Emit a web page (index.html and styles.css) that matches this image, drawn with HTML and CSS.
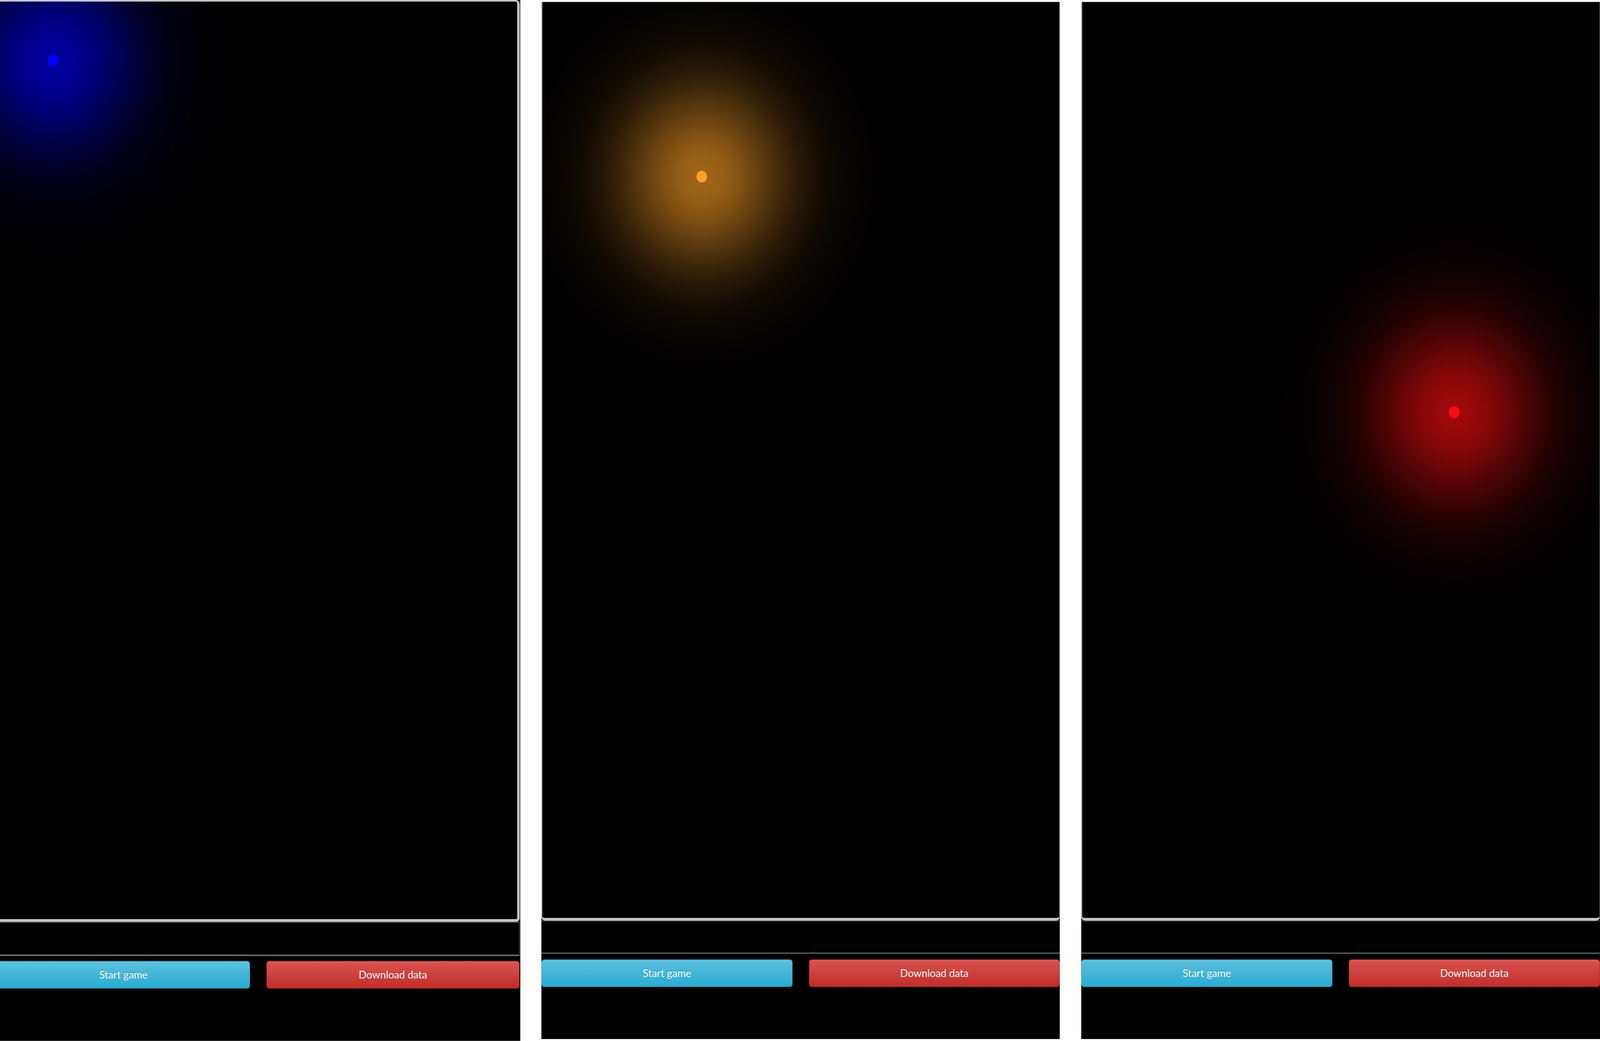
FILE: index.html
```html
<!DOCTYPE html>
<html lang="en">
<head>
<meta charset="utf-8">
<title>Game panels</title>
<link rel="stylesheet" href="styles.css">
</head>
<body>
<div class="stage">
  <section class="panel panel-first">
    <div class="panel-inner">
      <div class="canvas canvas-first glow-blue">
        <span class="dot dot-blue"></span>
      </div>
      <div class="status status-first"></div>
      <div class="actions actions-first">
        <button class="btn btn-info">Start game</button>
        <button class="btn btn-danger">Download data</button>
      </div>
    </div>
  </section>
  <section class="panel panel-other">
    <div class="panel-inner">
      <div class="canvas canvas-other glow-orange">
        <span class="dot dot-orange"></span>
      </div>
      <div class="status"></div>
      <div class="actions">
        <button class="btn btn-info">Start game</button>
        <button class="btn btn-danger">Download data</button>
      </div>
    </div>
  </section>
  <section class="panel panel-other panel-last">
    <div class="panel-inner">
      <div class="canvas canvas-other glow-red">
        <span class="dot dot-red"></span>
      </div>
      <div class="status"></div>
      <div class="actions">
        <button class="btn btn-info">Start game</button>
        <button class="btn btn-danger">Download data</button>
      </div>
    </div>
  </section>
</div>
</body>
</html>
```

FILE: styles.css
```css
:root {
  /* one pixel of the 4524 x 2664 design, mapped onto the viewport */
  --ux: calc(100vw / 4524);
  --uy: calc(100vh / 2664);
}

html, body {
  margin: 0;
  padding: 0;
  background: #ffffff;
}

body {
  width: 100vw;
  height: 100vh;
  overflow: hidden;
  font-family: Lato, "Open Sans", "Liberation Sans", sans-serif;
}

.stage {
  display: flex;
  gap: calc(60 * var(--ux));
  width: 100%;
  height: 100%;
}

.panel {
  background: #000;
  overflow: hidden;
  flex: none;
}

.panel-first {
  box-sizing: border-box;
  width: calc(1471 * var(--ux));
  height: calc(2664 * var(--uy));
  border-bottom: calc(1 * var(--uy)) solid #5e5e5e;
}

.panel-other {
  width: calc(1466 * var(--ux));
  height: calc(2654 * var(--uy));
  margin-top: calc(5 * var(--uy));
}

.panel-last {
  width: calc(1467 * var(--ux));
}

.panel-inner {
  display: flex;
  flex-direction: column;
  height: 100%;
}

.panel-first .panel-inner {
  margin-left: calc(-9 * var(--ux));
  width: calc(1478 * var(--ux));
}

/* ---------- canvas ---------- */
.canvas {
  position: relative;
  box-sizing: border-box;
  background-color: #000;
  background-origin: border-box;
  background-clip: border-box;
  background-image: radial-gradient(ellipse calc(520 * var(--ux)) calc(520 * var(--uy)) at calc(var(--x) * var(--ux)) calc(var(--y) * var(--uy)),
    rgba(var(--c), 0.63) 0%,
    rgba(var(--c), 0.60) 9.6%,
    rgba(var(--c), 0.52) 19.2%,
    rgba(var(--c), 0.41) 28.8%,
    rgba(var(--c), 0.30) 38.5%,
    rgba(var(--c), 0.195) 48.1%,
    rgba(var(--c), 0.116) 57.7%,
    rgba(var(--c), 0.063) 67.3%,
    rgba(var(--c), 0.031) 76.9%,
    rgba(var(--c), 0.014) 86.5%,
    rgba(var(--c), 0) 100%);
  flex: none;
}

.canvas-first {
  width: calc(1478 * var(--ux));
  height: calc(2359 * var(--uy));
  border-style: solid;
  border-color: rgba(255, 255, 255, 0.78);
  border-width: calc(4 * var(--uy)) calc(7 * var(--ux)) calc(7 * var(--uy)) calc(7 * var(--ux));
  border-radius: 0 calc(10 * var(--ux)) calc(10 * var(--ux)) calc(10 * var(--ux)) / 0 calc(10 * var(--uy)) calc(10 * var(--uy)) calc(10 * var(--uy));
  box-shadow: calc(2 * var(--ux)) calc(2 * var(--uy)) 0 #3c3c3c;
}

.canvas-other {
  width: 100%;
  height: calc(2351 * var(--uy));
  border-style: solid;
  border-color: rgba(255, 255, 255, 0.78);
  border-width: 0 calc(2 * var(--ux)) calc(7 * var(--uy)) calc(2 * var(--ux));
  border-right-color: rgba(255, 255, 255, 0.5);
  border-radius: 0 0 calc(10 * var(--ux)) calc(10 * var(--ux)) / 0 0 calc(10 * var(--uy)) calc(10 * var(--uy));
  box-shadow: inset calc(2 * var(--ux)) 0 0 #7c7c7c;
}

.glow-blue {
  --c: 0, 0, 255;
  --x: 159;
  --y: 155;
}

.glow-orange {
  --c: 255, 161, 38;
  --x: 456;
  --y: 447;
}

.glow-red {
  --c: 255, 14, 16;
  --x: 1058;
  --y: 1050;
}

.dot {
  position: absolute;
  width: calc(30 * var(--ux));
  height: calc(30 * var(--uy));
  border-radius: 50%;
}

.dot-blue {
  background: #0000ff;
  left: calc(137 * var(--ux));
  top: calc(136 * var(--uy));
}

.dot-orange {
  background: #ffa126;
  left: calc(437 * var(--ux));
  top: calc(432 * var(--uy));
}

.dot-red {
  background: #ff0a10;
  left: calc(1039 * var(--ux));
  top: calc(1035 * var(--uy));
}

/* ---------- status strip ---------- */
.status {
  flex: none;
  height: calc(80 * var(--uy));
  border-top: calc(2 * var(--uy)) solid #454545;
  border-bottom: calc(2 * var(--uy)) solid #7a7a7a;
  box-shadow: 0 calc(1 * var(--uy)) 0 #2e2e2e;
}

.status-first {
  height: calc(81 * var(--uy));
  border-top-width: calc(3 * var(--uy));
  border-bottom-width: calc(3 * var(--uy));
  border-right: calc(1 * var(--ux)) solid #8a8a8a;
  width: calc(1477 * var(--ux));
}

/* ---------- buttons ---------- */
.actions {
  display: grid;
  grid-template-columns: 1fr 1fr;
  column-gap: calc(46 * var(--ux));
  margin-top: calc(15 * var(--uy));
  flex: none;
}

.actions-first {
  margin-top: calc(13 * var(--uy));
}

.btn {
  box-sizing: border-box;
  height: calc(71 * var(--uy));
  margin: 0;
  padding: 0;
  border-style: solid;
  border-width: calc(2 * var(--uy)) calc(2 * var(--ux));
  border-radius: calc(8 * var(--ux)) / calc(8 * var(--uy));
  color: #ffffff;
  font-family: Lato, "Open Sans", "Liberation Sans", sans-serif;
  font-size: calc(29 * var(--ux));
  font-weight: 400;
  line-height: calc(67 * var(--uy));
  text-align: center;
  text-shadow: 0 calc(-2 * var(--uy)) 0 rgba(0, 0, 0, 0.2);
  box-shadow: inset 0 calc(2 * var(--uy)) 0 rgba(255, 255, 255, 0.15);
  cursor: pointer;
  overflow: hidden;
  white-space: nowrap;
}

.btn-info {
  background-image: linear-gradient(to bottom, #5bc0de 0, #2aabd2 100%);
  border-color: #2589a8;
}

.btn-danger {
  background-image: linear-gradient(to bottom, #d9534f 0, #c12e2a 100%);
  border-color: #a82824;
}
```
